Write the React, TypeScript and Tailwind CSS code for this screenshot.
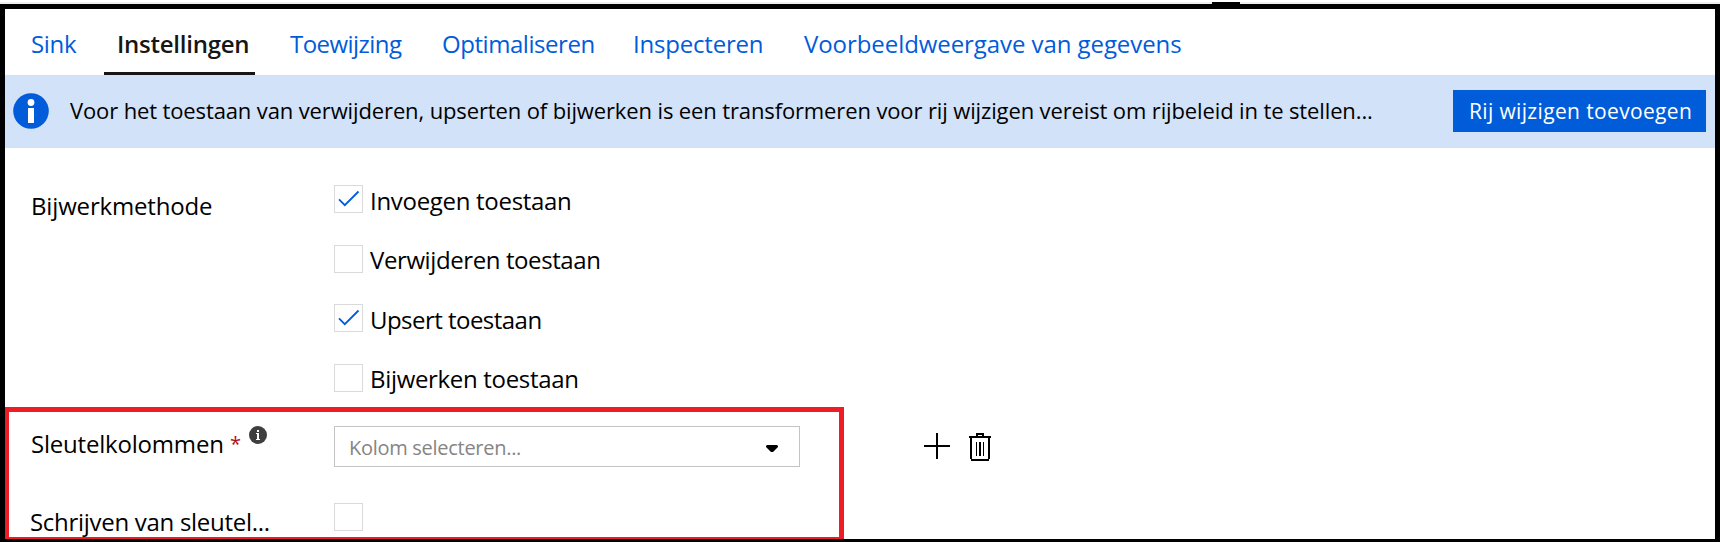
const tabs = [
  { label: 'Sink', cls: 'w-[74px] pl-px tracking-[-0.313px]' },
  { label: 'Instellingen', active: true, cls: 'w-[151px] mr-[35px] pl-[13px] tracking-[-0.25px]' },
  { label: 'Toewijzing', cls: 'w-[152px] tracking-[-0.542px]' },
  { label: 'Optimaliseren', cls: 'w-[190px] tracking-[-0.45px]' },
  { label: 'Inspecteren', cls: 'w-[172px] pl-px tracking-[-0.2px]' },
  { label: 'Voorbeeldweergave van gegevens', cls: 'w-[400px] tracking-[-0.07px]' },
];

const methods = [
  { label: 'Invoegen toestaan', checked: true, row: 'h-[60px]', cls: 'mt-px pl-[7px] tracking-[-0.3px]' },
  { label: 'Verwijderen toestaan', checked: false, row: 'h-[59px]', cls: 'pl-[7px] tracking-[-0.4px]' },
  { label: 'Upsert toestaan', checked: true, row: 'h-[60px]', cls: 'mt-px pl-[7px] tracking-[-0.53px]' },
  { label: 'Bijwerken toestaan', checked: false, row: 'h-[43px]', cls: 'pl-[7px] tracking-[-0.32px]' },
];

function Checkbox({ checked = false }: { checked?: boolean }) {
  return (
    <span role="checkbox" aria-checked={checked} className="block h-7 w-[29px] shrink-0 border border-[#dadada] bg-white">
      {checked && (
        <svg width="27" height="26" viewBox="0 0 27 26" fill="none" stroke="#015cda" strokeWidth="1.8">
          <path d="M4 13.3 L9.8 19.2 L23.5 5.5" />
        </svg>
      )}
    </span>
  );
}

function InfoIcon() {
  return (
    <svg className="shrink-0" width="36" height="36" viewBox="0 0 36 36">
      <circle cx="18" cy="18" r="17.8" fill="#015cda" />
      <circle cx="18" cy="9.5" r="3.4" fill="#fff" />
      <rect x="15" y="15" width="6" height="15" fill="#fff" />
    </svg>
  );
}

function HintIcon() {
  return (
    <svg className="shrink-0" width="18" height="18" viewBox="0 0 18 18">
      <circle cx="9" cy="9" r="9" fill="#3f3f3f" />
      <path d="M8 4h2v2H8zM7 7h3v6h1v1H7v-1h1V8H7z" fill="#fff" />
    </svg>
  );
}

function TrashIcon() {
  return (
    <svg width="22" height="28" viewBox="0 0 22 28" shapeRendering="crispEdges">
      <path
        d="M7 0h8v3h-2V2H9v1H7zM0 3h22v2H0zM1 5h2v21H1zM19 5h2v21h-2zM2 26h18v2H2zM7 9h1v14H7zM10 9h2v14h-2zM14 9h1v14h-1z"
        fill="#000"
      />
    </svg>
  );
}

export default function App() {
  return (
    <div className="flex h-[542px] w-[1720px] flex-col overflow-hidden bg-white font-['Open_Sans',sans-serif] text-2xl/[30px] whitespace-nowrap text-black">
      <div className="mt-0.5 h-0.5 shrink-0 bg-[#efefef] pl-[1212px]">
        <div className="h-0.5 w-7 bg-black" />
      </div>
      <div className="flex h-[538px] flex-col border-x-[5px] border-t-[5px] border-b-[3px] border-black">
        <nav className="flex h-[66px] shrink-0 pl-[25px] text-[#015cda]">
          {tabs.map((t) => (
            <a
              key={t.label}
              className={`block shrink-0 pt-5 ${t.cls} ${t.active ? 'border-b-[3px] border-[#161616] font-semibold text-[#161616]' : ''}`}
            >
              {t.label}
            </a>
          ))}
        </nav>

        <div className="flex h-[73px] shrink-0 items-start border-y border-[#dedede] bg-[#d2e2f9] pl-2">
          <div className="pt-[17px]">
            <InfoIcon />
          </div>
          <p className="w-[1404px] pt-[19px] pl-[21px] text-[22px]/[30px] tracking-[-0.127px]">
            Voor het toestaan van verwijderen, upserten of bijwerken is een transformeren voor rij wijzigen vereist om
            rijbeleid in te stellen...
          </p>
          <button className="mt-[14px] h-[42px] w-[253px] bg-[#015cda] pb-[1px] pl-4 text-left text-[21px]/[28px] tracking-[0.353px] text-white">
            Rij wijzigen toevoegen
          </button>
        </div>

        <div className="flex h-[259px] shrink-0 pt-[37px] pl-[25px]">
          <div className="w-[304px] pt-[6px] pl-px tracking-[-0.16px]">Bijwerkmethode</div>
          <div className="flex flex-col">
            {methods.map((m) => (
              <label key={m.label} className={`flex items-start ${m.row}`}>
                <Checkbox checked={m.checked} />
                <span className={m.cls}>{m.label}</span>
              </label>
            ))}
          </div>
        </div>

        <div className="flex h-[132px] shrink-0">
          <section className="h-[132px] w-[839px] overflow-hidden border-t-[5px] border-r-[5px] border-b-2 border-l-4 border-[#ee1c24]">
            <div className="flex h-[91px] items-start pt-[14px]">
              <div className="flex w-[325px] items-start pl-[22px]">
                <span className="w-[199px] pt-[3px] tracking-[-0.2px]">Sleutelkolommen</span>
                <span className="w-[19px] pt-[3px] text-[20px]/[30px] text-[#b10e1e]">*</span>
                <HintIcon />
              </div>
              <div className="flex h-[41px] w-[466px] items-start justify-between border border-[#c4c4c4] pr-[21px] pl-[14px]">
                <span className="pt-[7px] text-[20px]/[28px] tracking-[-0.285px] text-[#858585]">Kolom selecteren...</span>
                <svg className="mt-[18px]" width="12" height="7" viewBox="0 0 12 7">
                  <path d="M1 0H11L12 1V2L7 7H5L0 2V1Z" fill="#000" />
                </svg>
              </div>
            </div>
            <div className="flex items-start">
              <span className="w-[325px] pt-1 pl-[21px] tracking-[-0.29px]">Schrijven van sleutel...</span>
              <Checkbox />
            </div>
          </section>
          <div className="flex items-start gap-[19px] pt-[26px] pl-20">
            <svg width="26" height="26" viewBox="0 0 26 26" shapeRendering="crispEdges">
              <path d="M12 0h2v26h-2zM0 12h26v2H0z" fill="#000" />
            </svg>
            <TrashIcon />
          </div>
        </div>
      </div>
    </div>
  );
}
